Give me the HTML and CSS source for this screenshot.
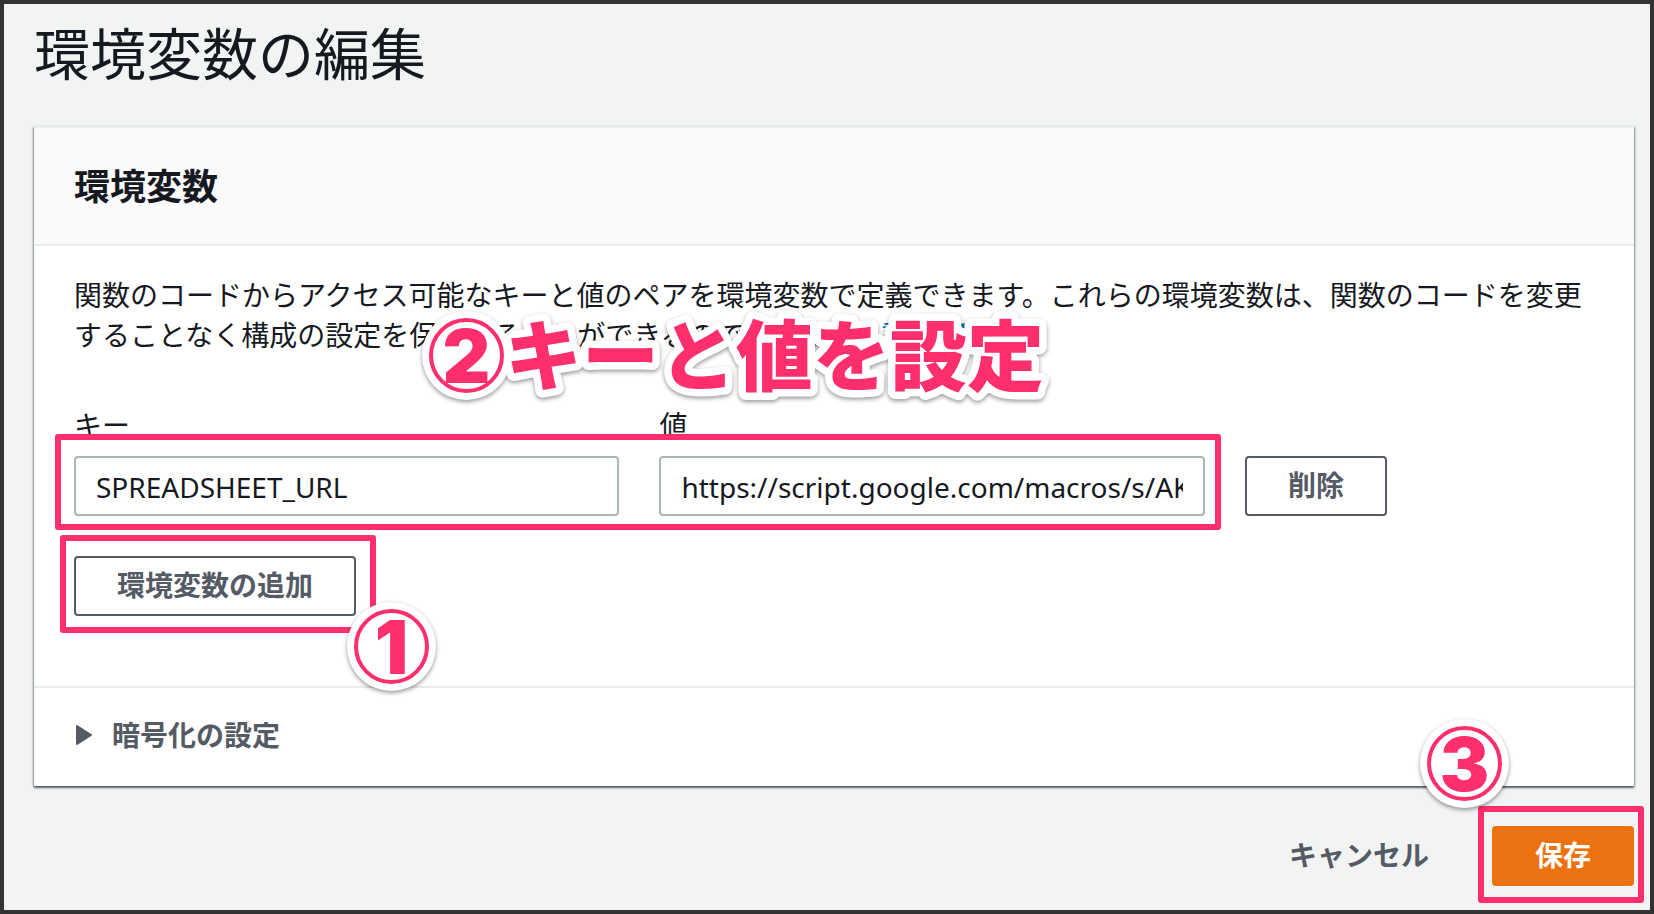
FILE: index.html
```html
<!DOCTYPE html>
<html lang="ja">
<head>
<meta charset="utf-8">
<title>環境変数の編集</title>
<link rel="stylesheet" href="styles.css">
</head>
<body>
<main class="page">
  <h1 class="page-title">環境変数の編集</h1>
  <form class="form">
    <section class="panel">
      <header class="panel-header">
        <h2 class="panel-title">環境変数</h2>
      </header>
      <div class="panel-body">
        <p class="description">関数のコードからアクセス可能なキーと値のペアを環境変数で定義できます。これらの環境変数は、関数のコードを変更することなく構成の設定を保存することができるので便利です。<a class="link" href="#">詳細 <svg class="link-icon" viewBox="0 0 16 16" aria-hidden="true"><path d="M9 2h5v5M14 2L7 9M6 3H2v11h11v-4"/></svg></a></p>
        <div class="variable">
          <div class="field">
            <label class="label" for="key">キー</label>
            <input class="input" id="key" type="text" value="SPREADSHEET_URL">
          </div>
          <div class="field">
            <label class="label" for="value">値</label>
            <input class="input" id="value" type="text" value="https://script.google.com/macros/s/AKfycb">
          </div>
          <button class="button" type="button">削除</button>
          <div class="marker marker-fields"></div>
          <div class="callout callout-fields">
            <span class="badge">2</span>
            <svg class="callout-svg" viewBox="0 0 540 75"><text class="callout-text" x="0" y="67">キーと値を設定</text></svg>
          </div>
        </div>
        <div class="add">
          <button class="button" type="button">環境変数の追加</button>
          <div class="marker marker-add"></div>
          <div class="callout callout-add"><span class="badge">1</span></div>
        </div>
      </div>
      <details class="expander">
        <summary class="expander-summary"><svg class="caret" viewBox="0 0 16 20" aria-hidden="true"><path d="M1 1L15 10L1 19Z"/></svg>暗号化の設定</summary>
      </details>
    </section>
    <footer class="actions">
      <button class="button button-link" type="button">キャンセル</button>
      <div class="save">
        <button class="button button-primary" type="submit">保存</button>
        <div class="marker marker-save"></div>
        <div class="callout callout-save"><span class="badge">3</span></div>
      </div>
    </footer>
  </form>
</main>
</body>
</html>
```
FILE: styles.css
```css
* {
  box-sizing: border-box;
}

body {
  margin: 0;
  background: #f2f3f3;
  color: #16191f;
  font-family: "Noto Sans", "Noto Sans CJK JP", sans-serif;
  font-size: 28px;
  line-height: 40px;
}

.page {
  min-height: 100vh;
  padding: 11px 16px 24px 30px;
  border: 4px solid #333;
}

.page-title {
  margin: 0 0 39px;
  font-family: "Noto Sans CJK JP", sans-serif;
  font-size: 56px;
  font-weight: 400;
  line-height: 72px;
}

.panel {
  background: #fff;
  border-top: 2px solid #eaeded;
  box-shadow: 0 2px 2px 0 rgba(0, 28, 36, 0.5), 1px 1px 2px 0 rgba(0, 28, 36, 0.3), -1px 1px 2px 0 rgba(0, 28, 36, 0.3);
}

.panel-header {
  padding: 35px 40px 33px;
  background: #fafafa;
  border-bottom: 2px solid #eaeded;
}

.panel-title {
  margin: 0;
  font-size: 36px;
  font-weight: 700;
  line-height: 48px;
}

.panel-body {
  padding: 29px 40px 70px;
}

.description {
  margin: 0 0 50px;
}

.link {
  color: #0073bb;
  text-decoration: none;
}

.link-icon {
  width: 24px;
  height: 24px;
  fill: none;
  stroke: currentColor;
  stroke-width: 2;
}

.variable {
  position: relative;
  display: grid;
  grid-template-columns: 25fr 25fr 16fr;
  gap: 40px;
  align-items: end;
  justify-items: start;
}

.field {
  display: flex;
  flex-direction: column;
  gap: 11px;
  width: 100%;
}

.input {
  width: 100%;
  height: 60px;
  padding: 2px 20px 0;
  border: 2px solid #aab7b8;
  border-radius: 4px;
  background: #fff;
  color: #16191f;
  font: inherit;
}

.button {
  height: 60px;
  padding: 0 41px 2px;
  border: 2px solid #545b64;
  border-radius: 4px;
  background: #fff;
  color: #545b64;
  font: inherit;
  font-weight: 700;
  line-height: 40px;
}

.button-link {
  border-color: transparent;
  background: transparent;
}

.button-primary {
  border-color: #ec7211;
  background: #ec7211;
  color: #fff;
}

.add {
  position: relative;
  width: fit-content;
  margin-top: 40px;
}

.expander {
  padding: 27px 40px 31px;
  border-top: 2px solid #eaeded;
}

.expander-summary {
  display: flex;
  align-items: center;
  gap: 20px;
  color: #545b64;
  font-weight: 700;
  list-style: none;
}

.caret {
  width: 16px;
  height: 20px;
  margin-left: 2px;
  fill: currentColor;
  stroke: currentColor;
  stroke-width: 2;
  stroke-linejoin: round;
}

.actions {
  display: flex;
  justify-content: flex-end;
  gap: 20px;
  margin-top: 40px;
}

.save {
  position: relative;
}

.marker {
  position: absolute;
  border: 6px solid #ff2e6c;
  border-radius: 3px;
  pointer-events: none;
}

.marker-fields {
  top: 29px;
  right: 373px;
  bottom: -14px;
  left: -19px;
}

.marker-add {
  inset: -21px -20px -17px -14px;
}

.marker-save {
  inset: -20px -10px -17px -14px;
}

.callout {
  position: absolute;
  display: flex;
  align-items: center;
  color: #ff2e6c;
  font-size: 77px;
  font-weight: 900;
  line-height: 76px;
  white-space: nowrap;
  pointer-events: none;
  filter: drop-shadow(0 2px 2px rgba(0, 0, 0, 0.4));
}

.callout-fields {
  top: -87px;
  left: 355px;
}

.callout-add {
  top: 53px;
  left: 280px;
}

.callout-save {
  top: -100px;
  left: -65px;
}

.callout-svg {
  width: 540px;
  height: 75px;
  margin-left: 1px;
  overflow: visible;
}

.callout-text {
  font-family: "Noto Sans CJK JP", sans-serif;
  fill: #ff2e6c;
  stroke: #fff;
  stroke-width: 15px;
  stroke-linejoin: round;
  paint-order: stroke;
}

.badge {
  display: flex;
  align-items: center;
  justify-content: center;
  width: 75px;
  height: 75px;
  border: 4px solid #ff2e6c;
  border-radius: 50%;
  background: #fff;
  box-shadow: 0 0 0 7px #fff;
  font-family: Inter, sans-serif;
  font-size: 74px;
}
```
